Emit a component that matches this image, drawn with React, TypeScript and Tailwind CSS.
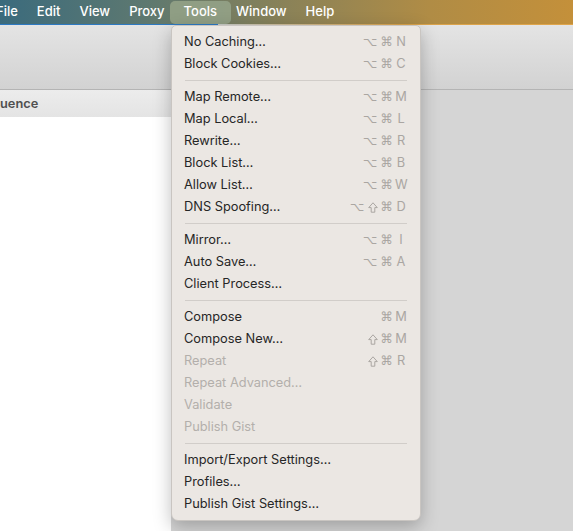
type Item = {
  label: string;
  mods?: string[];
  keyChar?: string;
  disabled?: boolean;
};

const groups: Item[][] = [
  [
    { label: 'No Caching…', mods: ['⌥', '⌘'], keyChar: 'N' },
    { label: 'Block Cookies…', mods: ['⌥', '⌘'], keyChar: 'C' },
  ],
  [
    { label: 'Map Remote…', mods: ['⌥', '⌘'], keyChar: 'M' },
    { label: 'Map Local…', mods: ['⌥', '⌘'], keyChar: 'L' },
    { label: 'Rewrite…', mods: ['⌥', '⌘'], keyChar: 'R' },
    { label: 'Block List…', mods: ['⌥', '⌘'], keyChar: 'B' },
    { label: 'Allow List…', mods: ['⌥', '⌘'], keyChar: 'W' },
    { label: 'DNS Spoofing…', mods: ['⌥', '⇧', '⌘'], keyChar: 'D' },
  ],
  [
    { label: 'Mirror…', mods: ['⌥', '⌘'], keyChar: 'I' },
    { label: 'Auto Save…', mods: ['⌥', '⌘'], keyChar: 'A' },
    { label: 'Client Process…' },
  ],
  [
    { label: 'Compose', mods: ['⌘'], keyChar: 'M' },
    { label: 'Compose New…', mods: ['⇧', '⌘'], keyChar: 'M' },
    { label: 'Repeat', mods: ['⇧', '⌘'], keyChar: 'R', disabled: true },
    { label: 'Repeat Advanced…', disabled: true },
    { label: 'Validate', disabled: true },
    { label: 'Publish Gist', disabled: true },
  ],
  [
    { label: 'Import/Export Settings…' },
    { label: 'Profiles…' },
    { label: 'Publish Gist Settings…' },
  ],
];

const menuBar = ['Edit', 'View', 'Proxy', 'Tools', 'Window', 'Help'];

// shift arrow, drawn since the fallback glyph is too thin
function ShiftIcon() {
  return (
    <svg width="10" height="11" viewBox="0 0 10 11" className="block">
      <path
        d="M5 0.8 L9.3 5.6 H6.8 V10.2 H3.2 V5.6 H0.7 Z"
        fill="none"
        stroke="currentColor"
        strokeWidth="1"
        strokeLinejoin="round"
      />
    </svg>
  );
}

function MenuRow({ item }: { item: Item }) {
  return (
    <div
      className={`flex h-[22px] items-center justify-between pl-[12px] pr-[13px] ${
        item.disabled ? 'text-[#b3afab]' : 'text-[#262626]'
      }`}
    >
      <span>{item.label}</span>
      {item.keyChar && (
        <span className="flex items-center text-[#aaa6a2]">
          <span className="flex items-center gap-[3px] font-['DejaVu_Sans',sans-serif] text-[12.5px]">
            {item.mods?.map((m, i) =>
              m === '⇧' ? <ShiftIcon key={i} /> : <span key={i}>{m}</span>
            )}
          </span>
          <span className="ml-[2px] w-[12px] text-center">{item.keyChar}</span>
        </span>
      )}
    </div>
  );
}

export default function App() {
  return (
    <div className="relative h-[531px] w-[573px] overflow-hidden font-['Inter','Liberation_Sans',sans-serif] text-[12.8px]">
      {/* menu bar */}
      <div className="relative h-[25px] bg-[linear-gradient(90deg,#3b6b7d_0%,#5d7870_25%,#8a8258_50%,#b08c45_75%,#c4903a_100%)]">
        <div className="flex h-6 items-center text-[13px] font-medium text-white">
          <span className="-ml-[4px] pr-[9.5px]">File</span>
          {menuBar.map((m) =>
            m === 'Tools' ? (
              <span
                key={m}
                className="-mx-[4px] flex h-[23px] items-center rounded-[5px] bg-[#93a287]/90 px-[13.5px]"
              >
                {m}
              </span>
            ) : (
              <span key={m} className="px-[9.5px]">
                {m}
              </span>
            )
          )}
        </div>
        <div className="absolute bottom-0 left-0 h-px w-full bg-[linear-gradient(90deg,#2d79c2_0%,#2d79c2_38%,#c7cbc8_38%,#d9a24a_70%,#e0a54a_100%)]" />
      </div>

      {/* window toolbar */}
      <div className="h-[65px] border-b border-[#b4b4b4] bg-[linear-gradient(#e4e4e4,#d2d2d2)]" />

      {/* panes */}
      <div className="flex h-[442px]">
        <div className="flex w-[171px] flex-col">
          <div className="flex h-[27px] items-center bg-[linear-gradient(#ececec,#e4e4e4)] font-semibold text-[#505050]">
            uence
          </div>
          <div className="flex-1 bg-white" />
        </div>
        <div className="flex-1 bg-[#d5d5d5]" />
      </div>

      {/* Tools dropdown */}
      <div className="absolute left-[171px] top-[25px] w-[250px] rounded-b-[7px] rounded-t-[5px] border border-[#c9c5c1] bg-[#ebe7e3] py-[5px] shadow-[0_6px_18px_rgba(0,0,0,0.25)]">
        {groups.map((g, gi) => (
          <div key={gi}>
            {gi > 0 && (
              <div className="flex h-[11px] items-center px-[13px]">
                <div className="h-px w-full bg-[#d1cdc9]" />
              </div>
            )}
            {g.map((item) => (
              <MenuRow key={item.label} item={item} />
            ))}
          </div>
        ))}
      </div>
    </div>
  );
}
